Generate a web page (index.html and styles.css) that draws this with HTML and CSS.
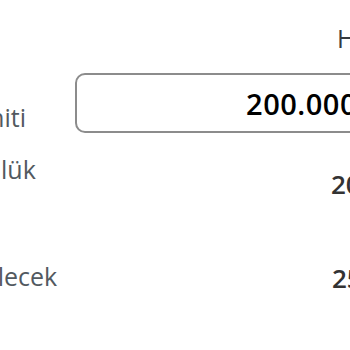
FILE: index.html
```html
<!DOCTYPE html>
<html lang="tr">
<head>
<meta charset="utf-8">
<link rel="stylesheet" href="styles.css">
</head>
<body>
<div class="form">
  <div class="label head-spacer"></div>
  <div class="col-head">Hesap</div>

  <div class="label label-limit">Limiti</div>
  <div class="field-cell"><input class="amount" type="text" value="200.000"></div>

  <div class="label label-daily">Günlük</div>
  <div class="value value-daily">20.000</div>

  <div class="label label-draw">Bildirilecek</div>
  <div class="value value-draw">25.000</div>
</div>
</body>
</html>
```
FILE: styles.css
```css
html, body {
  margin: 0;
  padding: 0;
  overflow: hidden;
  background: #ffffff;
}

body {
  width: 350px;
  height: 350px;
  font-family: "Open Sans", "Noto Sans", sans-serif;
}

.form {
  display: grid;
  grid-template-columns: 162px 400px;
  margin-left: -87px;
  align-items: start;
}

.label {
  font-size: 25px;
  line-height: 34px;
  color: #525960;
  text-align: center;
  white-space: nowrap;
}

.col-head {
  font-size: 25px;
  line-height: 34px;
  color: #343a40;
  padding-top: 21px;
  padding-left: 262px;
  white-space: nowrap;
}

.field-cell {
  padding-top: 18px;
}

.amount {
  box-sizing: border-box;
  width: 296px;
  height: 60px;
  border: 2px solid #8c8c8c;
  border-radius: 10px;
  padding: 0 12px;
  font-family: "Open Sans", "Noto Sans", sans-serif;
  font-size: 29px;
  font-weight: 600;
  letter-spacing: 0.5px;
  color: #000000;
  text-align: right;
  background: #ffffff;
  outline: none;
}

.label-limit {
  padding-top: 45px;
}

.label-daily {
  padding-top: 18px;
}

.value {
  font-size: 26px;
  line-height: 34px;
  font-weight: 600;
  color: #333333;
  white-space: nowrap;
}

.value-daily {
  padding-top: 33px;
  padding-left: 256px;
}

.label-draw {
  padding-top: 58px;
}

.value-draw {
  padding-top: 60px;
  padding-left: 257px;
}
```
